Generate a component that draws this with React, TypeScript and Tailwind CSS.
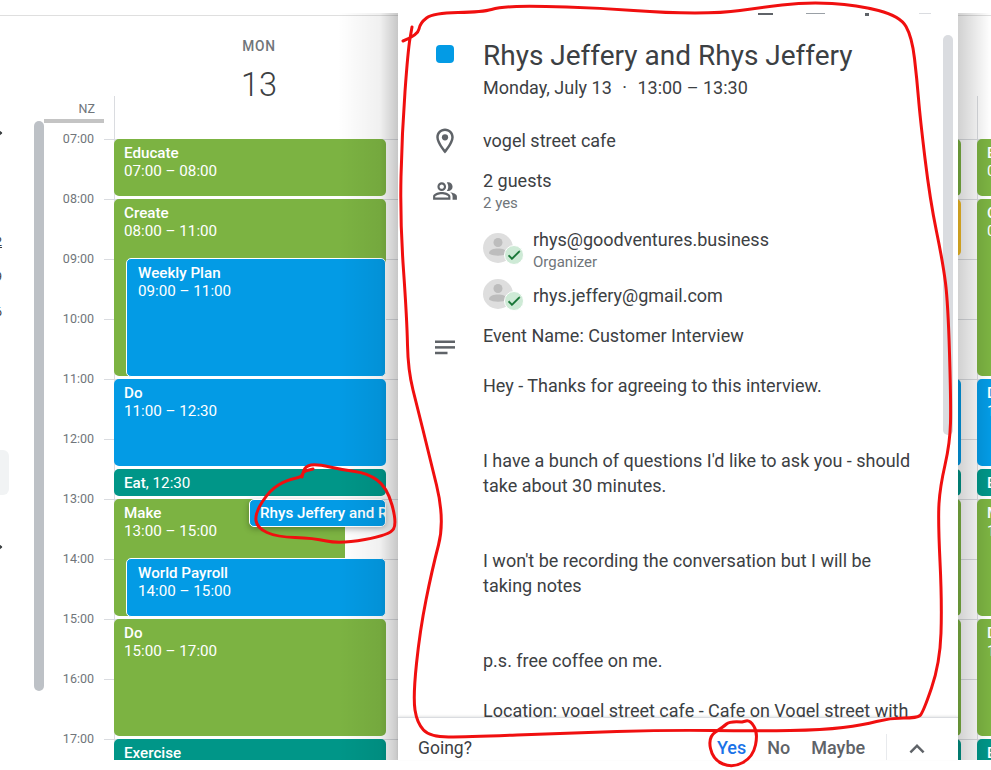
import React from "react";

type Ev = { title: string; time?: string; inline?: string; cls: string };

const hours = ["07:00", "08:00", "09:00", "10:00", "11:00", "12:00", "13:00", "14:00", "15:00", "16:00", "17:00"];

function smooth(p: number[][]) {
  let d = `M${p[0][0]} ${p[0][1]}`;
  for (let i = 1; i < p.length - 1; i++) {
    const mx = (p[i][0] + p[i + 1][0]) / 2;
    const my = (p[i][1] + p[i + 1][1]) / 2;
    d += ` Q${p[i][0]} ${p[i][1]} ${mx} ${my}`;
  }
  const l = p[p.length - 1];
  return d + ` L${l[0]} ${l[1]}`;
}

const outline = [
  [403, 41], [418, 35], [420, 23], [433, 13], [483, 12], [500, 7], [533, 6], [600, 8], [667, 13], [723, 13], [757, 8], [807, 2], [857, 5], [900, 16], [912, 37], [917, 80], [920, 117], [930, 200], [943, 263], [948, 303], [951, 403], [950, 443], [940, 487], [938, 520], [942, 603], [940, 663], [923, 713], [917, 718], [890, 718], [863, 725], [823, 730], [757, 731], [667, 730], [567, 733], [467, 737], [430, 737], [417, 723], [413, 697], [420, 630], [432, 570], [445, 520], [428, 450], [418, 410], [408, 370], [407, 320], [400, 220], [402, 133], [408, 50], [412, 27],
];
const chipCircle = [
  [313, 469], [303, 471], [302, 477], [287, 480], [270, 490], [255, 513], [257, 528], [277, 537], [313, 538], [340, 544], [390, 535], [397, 523], [387, 487], [367, 473], [343, 470], [317, 464], [305, 466], [302, 477],
];
const yesCircle = [
  [742, 722], [730, 721], [723, 727], [708, 737], [713, 760], [733, 768], [753, 757], [758, 733], [750, 720], [742, 722],
];

function EventBox({ ev }: { ev: Ev }) {
  return (
    <div className={`absolute overflow-hidden rounded-[5px] pl-[10px] pt-[5px] text-[15.2px] leading-[18px] text-white whitespace-nowrap ${ev.cls}`}>
      {ev.inline ? (
        <div><span className="font-medium">{ev.title}</span>{ev.inline}</div>
      ) : (
        <>
          <div className="font-medium">{ev.title}</div>
          {ev.time && <div>{ev.time}</div>}
        </>
      )}
    </div>
  );
}

const monday: Ev[] = [
  { title: "Educate", time: "07:00 – 08:00", cls: "left-0 w-[272px] top-[18px] h-[57px] bg-[#7cb342]" },
  { title: "Create", time: "08:00 – 11:00", cls: "left-0 w-[272px] top-[78px] h-[177px] bg-[#7cb342]" },
  { title: "Weekly Plan", time: "09:00 – 11:00", cls: "left-[12px] w-[260px] top-[137px] h-[119px] bg-[#039be5] border border-white !pl-[11px]" },
  { title: "Do", time: "11:00 – 12:30", cls: "left-0 w-[272px] top-[258px] h-[87px] bg-[#039be5]" },
  { title: "Eat", inline: ", 12:30", cls: "left-0 w-[272px] top-[348px] h-[27px] bg-[#009688]" },
  { title: "Make", time: "13:00 – 15:00", cls: "left-0 w-[231px] top-[378px] h-[117px] bg-[#7cb342]" },
  { title: "World Payroll", time: "14:00 – 15:00", cls: "left-[12px] w-[260px] top-[437px] h-[59px] bg-[#039be5] border border-white !pl-[11px]" },
  { title: "Do", time: "15:00 – 17:00", cls: "left-0 w-[272px] top-[498px] h-[117px] bg-[#7cb342]" },
  { title: "Exercise", time: "17:00 – 18:00", cls: "left-0 w-[272px] top-[618px] h-[57px] bg-[#009688]" },
];

const nextDay: Ev[] = [
  { title: "Educate", time: "07:00", cls: "left-0 w-[100px] top-[18px] h-[57px] bg-[#7cb342]" },
  { title: "Create", time: "08:00", cls: "left-0 w-[100px] top-[78px] h-[177px] bg-[#7cb342]" },
  { title: "Do", time: "11:00", cls: "left-0 w-[100px] top-[258px] h-[87px] bg-[#039be5]" },
  { title: "Eat", inline: ", 12:30", cls: "left-0 w-[100px] top-[348px] h-[27px] bg-[#009688]" },
  { title: "Make", time: "13:00", cls: "left-0 w-[100px] top-[378px] h-[117px] bg-[#7cb342]" },
  { title: "Do", time: "15:00", cls: "left-0 w-[100px] top-[498px] h-[117px] bg-[#7cb342]" },
  { title: "Exercise", cls: "left-0 w-[100px] top-[618px] h-[57px] bg-[#009688]" },
];

function Attendee({ email, sub, className, avatarClass }: { email: string; sub?: string; className?: string; avatarClass: string }) {
  return (
    <div className={`flex ${className ?? ""}`}>
      <div className={`relative w-[30px] h-[30px] shrink-0 rounded-full bg-[#dedede] ${avatarClass}`}>
        <svg viewBox="0 0 30 30" className="w-[30px] h-[30px]">
          <circle cx="15" cy="9.5" r="4.5" fill="#bdbdbd" />
          <path d="M6 20c0-3.2 5-4.6 9-4.6s9 1.4 9 4.6v0.5c-2 1.5-5.5 2.2-9 2.2s-7-.7-9-2.2z" fill="#bdbdbd" />
        </svg>
        <div className="absolute left-[21px] top-[12px] w-[20px] h-[20px] rounded-full border-[1.5px] border-white bg-[#ceead6] flex items-center justify-center">
          <svg viewBox="0 0 24 24" className="w-[16px] h-[16px]" fill="#137333" stroke="#137333" strokeWidth="1">
            <path d="M9 16.17 4.83 12l-1.42 1.41L9 19 21 7l-1.41-1.41z" />
          </svg>
        </div>
      </div>
      <div className="ml-[20px]">
        <div className="text-[18px] leading-[25px] text-[#3c4043]">{email}</div>
        {sub && <div className="text-[15px] leading-[20px] text-[#70757a]">{sub}</div>}
      </div>
    </div>
  );
}

export default function App() {
  return (
    <div className="relative w-[991px] h-[770px] overflow-hidden bg-white font-[Roboto,sans-serif]">
      <div className="h-[16px] border-b border-[#dfdfdf]" />

      <div className="relative h-[744px] overflow-hidden">
        {/* Header */}
        <div className="flex h-[105px]">
          <div className="w-[114px] flex flex-col items-end">
            <div className="mt-[85px] w-[60px] mr-[10px] text-right pr-[9px] text-[12.5px] leading-[16px] text-[#70757a]">NZ</div>
          </div>
          <div className="w-[290px] flex flex-col items-center">
            <div className="mt-[22px] text-[13.75px] leading-[16px] font-medium tracking-[0.8px] text-[#70757a]">MON</div>
            <div className="mt-[11px] text-[32.5px] leading-[40px] font-light text-[#3c4043]">13</div>
          </div>
        </div>

        {/* Body */}
        <div className="flex h-[639px]">
          <div className="relative w-[34px] shrink-0 overflow-hidden text-[12.5px] text-[#3c4043]">
            <div className="absolute -left-[5px] top-[9px] w-[8px] h-[8px]">
              <div className="w-[6px] h-[6px] rotate-45 border-t-2 border-r-2 border-[#3c4043]" />
            </div>
            <div className="absolute -left-[5px] top-[112px] underline">2</div>
            <div className="absolute -left-[5px] top-[147px]">9</div>
            <div className="absolute -left-[5px] top-[182px]">6</div>
            <div className="absolute -left-[6px] top-[329px] w-[15px] h-[45px] rounded-[6px] bg-[#f1f3f4]" />
            <div className="absolute -left-[5px] top-[423px] w-[8px] h-[8px]">
              <div className="w-[6px] h-[6px] rotate-45 border-t-2 border-r-2 border-[#3c4043]" />
            </div>
          </div>
          <div className="w-[10px] shrink-0 h-[570px] rounded-[5px] bg-[#bdc1c6]" />

          <div className="relative flex-1 pt-[18px]">
            <div className="absolute left-0 -top-[2px] w-[60px] h-[4px] bg-[#c4c4c4]" />
            {hours.map((h) => (
              <div key={h} className="flex h-[60px]">
                <div className="w-[50px] -mt-[9px] h-[18px] text-right text-[12.5px] leading-[18px] text-[#70757a]">{h}</div>
                <div className="ml-[10px] flex-1 border-t border-[#dadce0]" />
              </div>
            ))}
            <div className="absolute left-[70px] -top-[25px] bottom-0 w-px bg-[#dadce0]" />
            <div className="absolute left-[933px] -top-[25px] bottom-0 w-px bg-[#dadce0]" />

            <div className="absolute left-[70px] top-0 bottom-0 w-[290px]">
              {monday.map((ev, i) => (
                <EventBox key={i} ev={ev} />
              ))}
              <div className="absolute left-[135px] top-[378px] w-[137px] h-[28px] rounded-[5px] border border-white bg-[#039be5] overflow-hidden pl-[10px] pt-[4px] text-[15.2px] leading-[18px] font-medium text-white whitespace-nowrap shadow-[0_2px_6px_rgba(0,0,0,0.3)]">
                Rhys Jeffery and Rhys Jeffery
              </div>
            </div>

            {/* Previous day's event ends, beside the popup */}
            <div className="absolute left-[904px] top-0 bottom-0 w-[13px]">
              <div className="absolute left-0 w-[13px] top-[18px] h-[57px] rounded-[5px] bg-[#7cb342]" />
              <div className="absolute left-0 w-[13px] top-[78px] h-[57px] rounded-[5px] bg-[#f6bf26]" />
              <div className="absolute left-0 w-[13px] top-[258px] h-[87px] rounded-[5px] bg-[#039be5]" />
              <div className="absolute left-0 w-[13px] top-[348px] h-[27px] rounded-[5px] bg-[#009688]" />
              <div className="absolute left-0 w-[13px] top-[378px] h-[117px] rounded-[5px] bg-[#7cb342]" />
              <div className="absolute left-0 w-[13px] top-[498px] h-[117px] rounded-[5px] bg-[#7cb342]" />
              <div className="absolute left-0 w-[13px] top-[618px] h-[57px] rounded-[5px] bg-[#009688]" />
            </div>
            <div className="absolute left-[933px] top-0 bottom-0 w-[14px] overflow-hidden">
              {nextDay.map((ev, i) => (
                <EventBox key={i} ev={ev} />
              ))}
            </div>
          </div>
        </div>
      </div>

      {/* Shade cast by the popup */}
      <div className="absolute left-[338px] top-[13px] h-[747px] w-[60px] bg-gradient-to-r from-transparent via-[rgba(0,0,0,0.06)] via-70% to-[rgba(0,0,0,0.22)]" />
      <div className="absolute left-[958px] top-[13px] h-[747px] w-[33px] bg-gradient-to-r from-[rgba(0,0,0,0.18)] to-transparent" />

      {/* Event popup */}
      <div className="absolute left-[398px] top-[13px] w-[560px] h-[747px] bg-white flex flex-col">
        <div className="relative flex-1 min-h-0 overflow-hidden">
          <div className="flex h-0 pl-[360px] items-start">
            <div className="w-[15px] h-[2px] shrink-0 bg-[#5f6368]" />
            <div className="ml-[33px] w-[19px] h-[1px] shrink-0 bg-[#9aa0a6]" />
            <div className="ml-[40px] w-[4px] h-[3px] shrink-0 bg-[#5f6368]" />
            <div className="ml-[50px] w-[12px] h-[1px] shrink-0 bg-[#dadce0]" />
          </div>
          <div className="absolute right-[5px] top-[22px] w-[10px] h-[400px] rounded-[5px] bg-[#dadce0]" />

          <div className="pt-[24px] flex">
            <div className="w-[85px] shrink-0 flex justify-center pl-[9px] pt-[8px]">
              <div className="w-[18px] h-[18px] rounded-[4px] bg-[#039be5]" />
            </div>
            <div>
              <div className="text-[28px] leading-[37px] text-[#3c4043] whitespace-nowrap">Rhys Jeffery and Rhys Jeffery</div>
              <div className="mt-[1px] text-[18px] leading-[25px] text-[#3c4043] whitespace-nowrap">
                Monday, July 13 <span className="mx-[6px]">·</span> 13:00 – 13:30
              </div>
            </div>
          </div>

          <div className="mt-[28px] flex items-center h-[25px]">
            <div className="w-[85px] shrink-0 flex justify-center pl-[9px]">
              <svg viewBox="0 0 24 24" className="w-[30px] h-[30px]" fill="#5f6368">
                <path d="M12 2C8.13 2 5 5.13 5 9c0 5.25 7 13 7 13s7-7.75 7-13c0-3.87-3.13-7-7-7zM7 9c0-2.76 2.24-5 5-5s5 2.24 5 5c0 2.88-2.88 7.19-5 9.88C9.92 16.21 7 11.85 7 9z" />
                <circle cx="12" cy="9" r="2.5" />
              </svg>
            </div>
            <div className="text-[18px] leading-[25px] text-[#3c4043]">vogel street cafe</div>
          </div>

          <div className="mt-[15px] flex">
            <div className="w-[85px] shrink-0 flex justify-center pl-[9px] pt-[10px]">
              <svg viewBox="0 0 24 24" className="w-[26px] h-[26px]" fill="#5f6368">
                <path d="M16.67 13.13C18.04 14.06 19 15.32 19 17v3h4v-3c0-2.18-3.57-3.47-6.33-3.87zM15 12c2.21 0 4-1.79 4-4s-1.79-4-4-4c-.47 0-.91.1-1.33.24C14.5 5.27 15 6.58 15 8s-.5 2.73-1.33 3.76c.42.14.86.24 1.33.24zM9 12c2.21 0 4-1.79 4-4s-1.79-4-4-4-4 1.79-4 4 1.79 4 4 4zm0-6c1.1 0 2 .9 2 2s-.9 2-2 2-2-.9-2-2 .9-2 2-2zM9 13c-2.67 0-8 1.34-8 4v3h16v-3c0-2.66-5.33-4-8-4zm6 5H3v-.99C3.2 16.29 6.3 15 9 15s5.8 1.29 6 2v1z" />
              </svg>
            </div>
            <div>
              <div className="text-[18px] leading-[25px] text-[#3c4043]">2 guests</div>
              <div className="text-[15px] leading-[20px] text-[#70757a]">2 yes</div>
            </div>
          </div>

          <div className="pl-[85px]">
            <Attendee className="mt-[14px]" avatarClass="mt-[6px]" email="rhys@goodventures.business" sub="Organizer" />
            <Attendee className="mt-[11px]" avatarClass="-mt-[4px] -mb-[1px]" email="rhys.jeffery@gmail.com" />
          </div>

          <div className="mt-[15px] flex">
            <div className="w-[85px] shrink-0 flex justify-center pl-[9px] pt-[10px]">
              <svg viewBox="0 0 24 24" className="w-[30px] h-[30px]" fill="#5f6368">
                <rect x="4" y="6" width="16" height="2" />
                <rect x="4" y="10.5" width="16" height="2" />
                <rect x="4" y="15" width="10" height="2" />
              </svg>
            </div>
            <div className="w-[440px] text-[18px] leading-[25px] text-[#3c4043]">
              Event Name: Customer Interview
              <br />
              <br />
              Hey - Thanks for agreeing to this interview.
              <br />
              <br />
              <br />
              I have a bunch of questions I'd like to ask you - should take about 30 minutes.
              <br />
              <br />
              <br />
              I won't be recording the conversation but I will be taking notes
              <br />
              <br />
              <br />
              p.s. free coffee on me.
              <br />
              <br />
              Location: vogel street cafe - Cafe on Vogel street with
            </div>
          </div>
        </div>

        <div className="h-[43px] shrink-0 border-t border-[#dadce0] shadow-[0_-1px_2px_rgba(60,64,67,0.12)] flex items-start pt-[17px] pl-[20px] text-[17.5px] leading-[25px] text-[#3c4043] relative bg-white">
          <div className="mt-[1px]">Going?</div>
          <div className="ml-[245px] text-[18px] font-medium text-[#1a73e8]">Yes</div>
          <div className="ml-[21px] text-[18px] font-medium text-[#5f6368]">No</div>
          <div className="ml-[21px] text-[18px] font-medium text-[#5f6368]">Maybe</div>
          <div className="ml-[21px] w-px h-[26px] -mt-[1px] bg-[#e8eaed]" />
          <svg viewBox="0 0 24 24" className="ml-[15px] w-[30px] h-[30px] -mt-[1px]" fill="#5f6368">
            <path d="M12 8l-6 6 1.41 1.41L12 10.83l4.59 4.58L18 14z" />
          </svg>
        </div>
      </div>

      {/* Red pen annotations on top of the screenshot */}
      <svg viewBox="0 0 991 770" className="absolute inset-0 w-[991px] h-[770px] pointer-events-none" fill="none" stroke="#f00f0f" strokeWidth="3" strokeLinecap="round" strokeLinejoin="round">
        <path d={smooth(outline)} />
        <path d={smooth(chipCircle)} />
        <path d={smooth(yesCircle)} />
      </svg>
    </div>
  );
}
